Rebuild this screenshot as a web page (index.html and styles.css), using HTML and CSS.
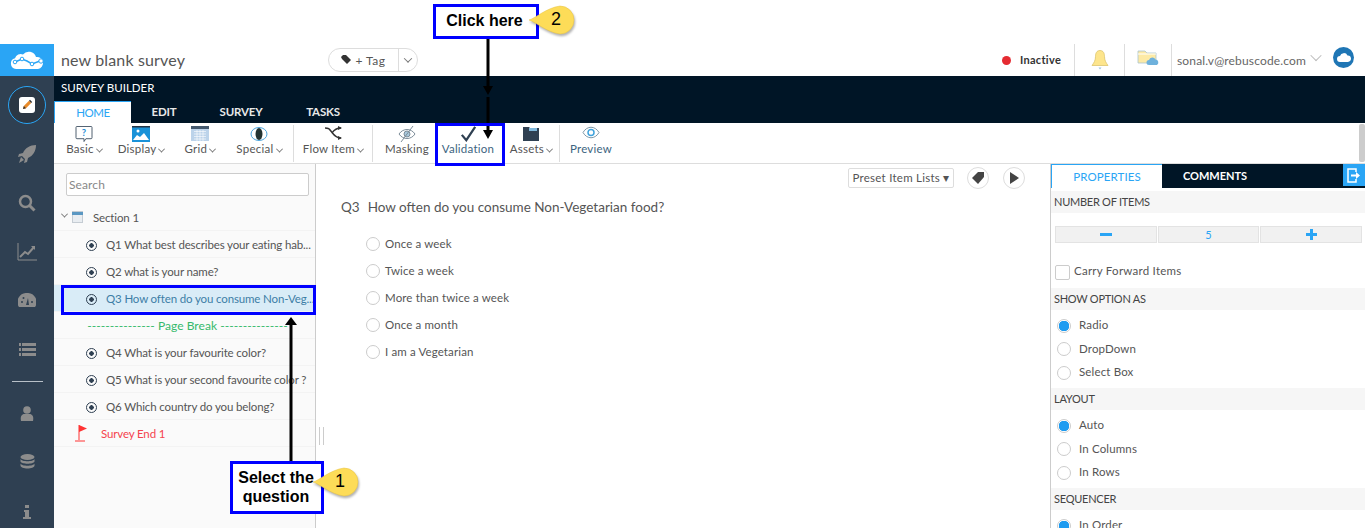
FILE: index.html
```html
<!DOCTYPE html>
<html lang="en">
<head>
    <meta charset="UTF-8">
    <meta name="viewport" content="width=device-width, initial-scale=1.0">
    <title>Survey Builder</title>
    <link rel="stylesheet" href="styles.css">
</head>
<body>
    <div class="page">
        <div class="app">
            <aside class="rail">
                <div class="rail-logo">
                    <svg width="36" height="22" viewBox="0 0 36 22"><path d="M7 20a5.500 5.500 0 0 1-1-10.800 6 6 0 0 1 8-3.700A7.500 7.500 0 0 1 27 8a6 6 0 0 1 2 12z" fill="#fff"/><path d="M6 13l7-3 5 2 5 3 8-3" fill="none" stroke="#2aa5f5" stroke-width="1.500"/><circle cx="6" cy="13" r="1.800" fill="#fff" stroke="#2aa5f5"/><circle cx="13" cy="10" r="1.800" fill="#fff" stroke="#2aa5f5"/><circle cx="23" cy="15" r="1.800" fill="#fff" stroke="#2aa5f5"/><circle cx="32" cy="12" r="2.200" fill="#fff" stroke="#2aa5f5"/></svg>
                </div>
                <div class="rail-item">
                    <span class="rail-active">
                        <svg width="16" height="16" viewBox="0 0 16 16"><rect width="16" height="16" rx="3" fill="#fff"/><path d="M4 12l.8-3L10 3.800l2.200 2.200L7 11.200z" fill="#e98b2a"/><path d="M10 3.800l1-1 2.200 2.200-1 1z" fill="#333"/><path d="M4 12l.8-3 2.200 2.200z" fill="#333"/></svg>
                    </span>
                </div>
                <div class="rail-item">
                    <svg width="18" height="18" viewBox="0 0 18 18"><path d="M18 0c-6 0-11 3-13 8l-4 1-1 3 4-1 3 3-1 4 3-1 1-4c5-2 8-7 8-13z" fill="#8c8c8c"/><path d="M3 12l3 3-5 3z" fill="#8c8c8c"/></svg>
                </div>
                <div class="rail-item">
                    <svg width="18" height="18" viewBox="0 0 18 18"><circle cx="7.500" cy="7.500" r="5.500" fill="none" stroke="#8c8c8c" stroke-width="2.500"/><path d="M11.500 11.500L16.500 16.500" stroke="#8c8c8c" stroke-width="3"/></svg>
                </div>
                <div class="rail-item">
                    <svg width="20" height="18" viewBox="0 0 20 18"><path d="M1 0v17h19" fill="none" stroke="#8c8c8c"/><path d="M3 14l5-5 3 2 6-7" fill="none" stroke="#8c8c8c" stroke-width="2"/><path d="M14 3h4v4z" fill="#8c8c8c"/></svg>
                </div>
                <div class="rail-item">
                    <svg width="18" height="15" viewBox="0 0 18 15"><path d="M9 0a9 9 0 0 0-8 14h16A9 9 0 0 0 9 0z" fill="#8c8c8c"/><path d="M8 12l2-7 1 7z" fill="#2f4052"/><circle cx="4" cy="9" r="1" fill="#2f4052"/><circle cx="5.500" cy="5" r="1" fill="#2f4052"/><circle cx="14" cy="9" r="1" fill="#2f4052"/></svg>
                </div>
                <div class="rail-item">
                    <svg width="17" height="13" viewBox="0 0 17 13"><path d="M0 0h2v3H0zM3 0h14v3H3zM0 5h2v3H0zM3 5h14v3H3zM0 10h2v3H0zM3 10h14v3H3z" fill="#8c8c8c"/></svg>
                </div>
                <div class="rail-rule"></div>
                <div class="rail-item">
                    <svg width="14" height="15" viewBox="0 0 14 15"><circle cx="7" cy="4" r="3.800" fill="#8c8c8c"/><path d="M1 15c-1-5 1-7 3.500-7h5c2.500 0 4.500 2 3.500 7z" fill="#8c8c8c"/></svg>
                </div>
                <div class="rail-item">
                    <svg width="15" height="17" viewBox="0 0 15 17"><ellipse cx="7.500" cy="3" rx="7" ry="3" fill="#8c8c8c"/><path d="M.5 5c1 3 13 3 14 0v2.500c-1 3-13 3-14 0zM.5 9.500c1 3 13 3 14 0v2c0 4-14 4-14 0z" fill="#8c8c8c"/></svg>
                </div>
                <div class="rail-item">
                    <svg width="8" height="14" viewBox="0 0 8 14"><path d="M2 0h4v3H2zM1 5h5v7h2v2H0v-2h2V7H1z" fill="#8c8c8c"/></svg>
                </div>
            </aside>

            <main class="main">
                <header class="header">
                    <div class="survey-title">new blank survey</div>
                    <div class="tag-btn">
                        <span class="tag-label">
                            <svg width="10" height="10" viewBox="0 0 10 10"><path d="M0 2l2-2 3 0 5 5-4 4-5-5z" fill="#333"/></svg>
                            + Tag
                        </span>
                        <span class="tag-drop"><span class="chev"></span></span>
                    </div>
                    <div class="header-right">
                        <span class="status-dot"></span>
                        <span class="status-text">Inactive</span>
                        <span class="head-cell head-bell">
                            <svg width="18" height="23" viewBox="0 0 18 22"><path d="M9 1c-3.500 0-4.500 3-4.500 6 0 4-1.500 6-3.500 9h16c-2-3-3.500-5-3.500-9 0-3-1-6-4.500-6z" fill="#fde58c" stroke="#d8bf62" stroke-width=".7"/><path d="M7.500 18h3L9 20z" fill="#9cc3dc"/></svg>
                        </span>
                        <span class="head-cell head-folder">
                            <svg width="22" height="20" viewBox="0 0 22 20"><path d="M1 3h7l2 2h9v10H1z" fill="#fdeaa5" stroke="#a9c4cf" stroke-width=".8"/><path d="M1 6h18" stroke="#fff"/><path d="M12 17a2.500 2.500 0 0 1 0-5 3.500 3.500 0 0 1 6.500-.5 3 3 0 0 1 1.500 5.500z" fill="#6eb1dc"/></svg>
                        </span>
                        <span class="user-email">sonal.v@rebuscode.com</span>
                        <span class="chev chev-user"></span>
                        <span class="avatar">
                            <svg width="14" height="9" viewBox="0 0 14 9"><path d="M3 9a3 3 0 0 1 0-6 4 4 0 0 1 7.500-.5A3.200 3.200 0 0 1 11 9z" fill="#fff"/></svg>
                        </span>
                    </div>
                </header>

                <div class="builder-bar">
                    <div class="builder-title">SURVEY BUILDER</div>
                    <ul class="tabs">
                        <li class="tab tab-active">HOME</li>
                        <li class="tab">EDIT</li>
                        <li class="tab">SURVEY</li>
                        <li class="tab">TASKS</li>
                    </ul>
                </div>

                <div class="toolbar">
                    <div class="tool">
                        <svg width="18" height="17" viewBox="0 0 18 17"><path d="M1.500.5h15a1 1 0 0 1 1 1v11a1 1 0 0 1-1 1H11l-2 3v-3H1.500a1 1 0 0 1-1-1v-11a1 1 0 0 1 1-1z" fill="#fff" stroke="#456"/><text x="9" y="10.500" class="tool-q">?</text></svg>
                        <span class="tool-label">Basic <i class="chev"></i></span>
                    </div>
                    <div class="tool">
                        <svg width="18" height="16" viewBox="0 0 18 16"><rect width="18" height="16" fill="#1a92d8"/><rect width="18" height="1.500" fill="#234"/><circle cx="6" cy="5" r="1.500" fill="#fff"/><path d="M1 14l4-5 3 2 4-4 5 7z" fill="#fff"/></svg>
                        <span class="tool-label">Display <i class="chev"></i></span>
                    </div>
                    <div class="tool">
                        <svg width="18" height="15" viewBox="0 0 18 15"><rect width="18" height="15" fill="#bcd3ea"/><rect width="18" height="3" fill="#42586e"/><path d="M3 5.500h12M3 8h12M3 10.500h12M3 13h12M6 4v11M9 4v11M12 4v11" stroke="#fff" stroke-width=".6"/></svg>
                        <span class="tool-label">Grid <i class="chev"></i></span>
                    </div>
                    <div class="tool">
                        <svg width="18" height="16" viewBox="0 0 18 16"><ellipse cx="9" cy="8" rx="8" ry="6.500" fill="#fff" stroke="#4aa3dc"/><ellipse cx="9" cy="8" rx="3.500" ry="6" fill="#233"/></svg>
                        <span class="tool-label">Special <i class="chev"></i></span>
                    </div>
                    <div class="tool-sep tool-sep-wide"></div>
                    <div class="tool">
                        <svg width="18" height="14" viewBox="0 0 18 14"><path d="M1 2c4 0 4 .5 7 4.500S13 12 17 12M8 7c2-3 4-5 9-5" fill="none" stroke="#333" stroke-width="1.500"/><path d="M14 0l4 2-4 2zM14 10l4 2-4 2z" fill="#333"/></svg>
                        <span class="tool-label">Flow Item <i class="chev"></i></span>
                    </div>
                    <div class="tool-sep"></div>
                    <div class="tool">
                        <svg width="18" height="16" viewBox="0 0 18 16"><path d="M1 8c4-6 12-6 16 0-4 6-12 6-16 0z" fill="#fff" stroke="#7d8d99"/><circle cx="9" cy="8" r="3" fill="#a8c8dc" stroke="#7d8d99"/><path d="M15 0L3 16" stroke="#7d8d99"/></svg>
                        <span class="tool-label">Masking</span>
                    </div>
                    <div class="tool">
                        <svg width="17" height="18" viewBox="0 0 17 18"><path d="M1 10l5 6L16 1" fill="none" stroke="#2f4052" stroke-width="2.500"/></svg>
                        <span class="tool-label tool-label-blue">Validation</span>
                    </div>
                    <div class="tool tool-assets">
                        <svg width="16" height="15" viewBox="0 0 16 15"><path d="M0 1h6l1 1h9v13H0z" fill="#2f4052"/><path d="M6 2h8v3H6z" fill="#7fb8dc"/></svg>
                        <span class="tool-label">Assets <i class="chev"></i></span>
                    </div>
                    <div class="tool-sep"></div>
                    <div class="tool">
                        <svg width="18" height="13" viewBox="0 0 18 13"><path d="M1 6.500c4-7 12-7 16 0-4 7-12 7-16 0z" fill="#fff" stroke="#7d98a8"/><circle cx="9" cy="6.500" r="3" fill="#fff" stroke="#3fa3dd" stroke-width="1.500"/></svg>
                        <span class="tool-label tool-label-blue">Preview</span>
                    </div>
                    <div class="toolbar-scroll"></div>
                </div>

                <div class="workspace">
                    <section class="tree">
                        <input class="tree-search" type="text" placeholder="Search">
                        <div class="tree-row tree-section">
                            <span class="chev chev-section"></span>
                            <svg width="11" height="12" viewBox="0 0 11 12"><rect width="11" height="12" fill="#e9edf1"/><rect x=".5" y=".5" width="10" height="11" fill="none" stroke="#c5ccd3"/><rect width="11" height="3" y="1" fill="#5a97c2"/></svg>
                            <span class="section-name">Section 1</span>
                        </div>
                        <div class="tree-row tree-q"><span class="q-dot"></span><span class="q-text">Q1 What best describes your eating hab...</span></div>
                        <div class="tree-row tree-q"><span class="q-dot"></span><span class="q-text">Q2 what is your name?</span></div>
                        <div class="tree-row tree-q tree-selected"><span class="q-dot"></span><span class="q-text">Q3 How often do you consume Non-Veg...</span></div>
                        <div class="tree-row tree-break">--------------- Page Break ---------------</div>
                        <div class="tree-row tree-q"><span class="q-dot"></span><span class="q-text">Q4 What is your favourite color?</span></div>
                        <div class="tree-row tree-q"><span class="q-dot"></span><span class="q-text">Q5 What is your second favourite color ?</span></div>
                        <div class="tree-row tree-q"><span class="q-dot"></span><span class="q-text">Q6 Which country do you belong?</span></div>
                        <div class="tree-row tree-end">
                            <svg width="12" height="18" viewBox="0 0 12 18"><path d="M4 1v15" stroke="#f33" stroke-width="1"/><path d="M4 1l8 3.500L4 8z" fill="#f33"/><path d="M0 17h10" stroke="#f33"/></svg>
                            <span>Survey End 1</span>
                        </div>
                    </section>

                    <section class="canvas">
                        <div class="resizer"></div>
                        <div class="canvas-tools">
                            <div class="preset-btn">Preset Item Lists &#9662;</div>
                            <span class="round-btn">
                                <svg width="14" height="14" viewBox="0 0 14 14"><path d="M1 7l6-6h6v5l-6 7z" fill="#444"/></svg>
                            </span>
                            <span class="round-btn">
                                <svg width="10" height="12" viewBox="0 0 10 12"><path d="M1 0l9 6-9 6z" fill="#444"/></svg>
                            </span>
                        </div>
                        <div class="question">
                            <span class="question-no">Q3</span>
                            <span>How often do you consume Non-Vegetarian food?</span>
                        </div>
                        <ul class="options">
                            <li class="option"><span class="radio"></span>Once a week</li>
                            <li class="option"><span class="radio"></span>Twice a week</li>
                            <li class="option"><span class="radio"></span>More than twice a week</li>
                            <li class="option"><span class="radio"></span>Once a month</li>
                            <li class="option"><span class="radio"></span>I am a Vegetarian</li>
                        </ul>
                    </section>

                    <section class="props">
                        <div class="props-tabs">
                            <div class="props-tab props-tab-active">PROPERTIES</div>
                            <div class="props-tab">COMMENTS</div>
                            <div class="props-export">
                                <svg width="14" height="15" viewBox="0 0 14 15"><path d="M9 4V1H1v13h8v-3" fill="none" stroke="#fff" stroke-width="1.500"/><path d="M4 6.500h5V4l4 3.500L9 11V8.500H4z" fill="#fff"/></svg>
                            </div>
                        </div>
                        <div class="props-head props-head-first">NUMBER OF ITEMS</div>
                        <div class="stepper">
                            <span class="step">
                                <svg width="12" height="3" viewBox="0 0 12 3"><rect width="12" height="3" fill="#2aa5f5"/></svg>
                            </span>
                            <span class="step">5</span>
                            <span class="step">
                                <svg width="11" height="11" viewBox="0 0 11 11"><path d="M4 0h3v4h4v3H7v4H4V7H0V4h4z" fill="#2aa5f5"/></svg>
                            </span>
                        </div>
                        <label class="carry"><span class="check"></span>Carry Forward Items</label>
                        <div class="props-head">SHOW OPTION AS</div>
                        <div class="prop-radios">
                            <div class="prop-radio"><span class="radio radio-on"></span>Radio</div>
                            <div class="prop-radio"><span class="radio"></span>DropDown</div>
                            <div class="prop-radio"><span class="radio"></span>Select Box</div>
                        </div>
                        <div class="props-head">LAYOUT</div>
                        <div class="prop-radios">
                            <div class="prop-radio"><span class="radio radio-on"></span>Auto</div>
                            <div class="prop-radio"><span class="radio"></span>In Columns</div>
                            <div class="prop-radio"><span class="radio"></span>In Rows</div>
                        </div>
                        <div class="props-head">SEQUENCER</div>
                        <div class="prop-radios">
                            <div class="prop-radio"><span class="radio radio-on"></span>In Order</div>
                        </div>
                    </section>
                </div>
            </main>
        </div>

        <!-- annotations drawn on top of the screenshot -->
        <svg class="arrows" width="1365" height="528" viewBox="0 0 1365 528">
            <path d="M488 39v50M488 97v34M291 461V325" stroke="#000" stroke-width="3" fill="none"/>
            <path d="M483 86h10l-5 9zM483 130h10l-5 9zM285 325h12l-6-8z" fill="#000"/>
        </svg>
        <div class="note-box note-validation"></div>
        <div class="note-box note-question"></div>
        <div class="note note-click">Click here</div>
        <div class="note note-select">Select the question</div>
        <div class="badge badge-two">
            <svg width="48" height="32" viewBox="0 0 48 32"><path d="M1 16C8 14 18 4 32 2a14 14 0 1 1 0 28C18 28 8 18 1 16z" fill="#fddc58" stroke="#e6c245" stroke-width=".5"/></svg>
            <span>2</span>
        </div>
        <div class="badge badge-one">
            <svg width="48" height="32" viewBox="0 0 48 32"><path d="M1 16C8 14 18 4 32 2a14 14 0 1 1 0 28C18 28 8 18 1 16z" fill="#fddc58" stroke="#e6c245" stroke-width=".5"/></svg>
            <span>1</span>
        </div>
    </div>
</body>
</html>
```
FILE: styles.css
```css
* {
    box-sizing: border-box;
}
body {
    font-family: Lato, "Open Sans", sans-serif;
    background-color: #fff;
    color: #555;
    margin: 0;
    padding: 0;
}
ul {
    list-style: none;
    margin: 0;
    padding: 0;
}
.page {
    position: relative;
    width: 1365px;
    height: 528px;
    overflow: hidden;
    padding-top: 44px;
}
.app {
    display: flex;
    height: 484px;
}

/* left rail */
.rail {
    width: 54px;
    flex: none;
    background-color: #2f4052;
    display: flex;
    flex-direction: column;
}
.rail-logo {
    height: 32px;
    flex: none;
    background-color: #2aa5f5;
    display: flex;
    align-items: center;
    justify-content: center;
}
.rail-item {
    height: 49px;
    flex: none;
    display: flex;
    align-items: center;
    justify-content: center;
}
.rail-item:nth-child(2) {
    margin-top: 4px;
}
.rail-active {
    width: 38px;
    height: 38px;
    border-radius: 50%;
    border: 1px solid #2aa5f5;
    background-color: #2b3744;
    display: flex;
    align-items: center;
    justify-content: center;
}
.rail-rule {
    height: 1px;
    flex: none;
    margin: 7px 11px 7px 12px;
    background-color: #b8c0c8;
}

/* header */
.main {
    flex: 1;
    min-width: 0;
    display: flex;
    flex-direction: column;
}
.header {
    height: 32px;
    flex: none;
    display: flex;
    align-items: center;
    padding-left: 7px;
}
.survey-title {
    width: 267px;
    font-size: 16px;
    letter-spacing: 0.15px;
    color: #555;
    padding-bottom: 2px;
}
.tag-btn {
    width: 90px;
    height: 24px;
    border: 1px solid #ddd;
    border-radius: 12px;
    display: flex;
    font-size: 12px;
    letter-spacing: 0.5px;
}
.tag-label {
    width: 70px;
    border-right: 1px solid #ddd;
    display: flex;
    align-items: center;
    justify-content: center;
    gap: 4px;
}
.tag-drop {
    flex: 1;
    display: flex;
    align-items: center;
    justify-content: center;
}
.chev {
    display: inline-block;
    width: 6px;
    height: 6px;
    border-right: 1px solid #777;
    border-bottom: 1px solid #777;
    transform: rotate(45deg) translate(-1px, -1px);
}
.header-right {
    margin-left: auto;
    display: flex;
    align-items: center;
    height: 32px;
}
.status-dot {
    width: 9px;
    height: 9px;
    border-radius: 50%;
    background-color: #e52b32;
    margin-right: 9px;
}
.status-text {
    width: 54px;
    font-size: 11px;
    font-weight: 700;
    letter-spacing: 0.3px;
    color: #333;
    padding-bottom: 2px;
}
.head-cell {
    height: 32px;
    border-left: 1px solid #ddd;
    display: flex;
    align-items: center;
    justify-content: center;
}
.head-bell {
    width: 50px;
}
.head-folder {
    width: 48px;
    border-right: 1px solid #ddd;
    padding-bottom: 4px;
}
.user-email {
    margin-left: 5px;
    width: 135px;
    font-size: 12px;
    letter-spacing: 0.15px;
    color: #666;
}
.chev-user {
    border-color: #bbb;
    margin-bottom: 6px;
    width: 8px;
    height: 8px;
}
.avatar {
    width: 21px;
    height: 21px;
    border-radius: 50%;
    background-color: #1f76b5;
    margin: 0 11px 6px 13px;
    display: flex;
    align-items: center;
    justify-content: center;
}

/* dark bar */
.builder-bar {
    height: 47px;
    flex: none;
    background-color: #001526;
    display: flex;
    flex-direction: column;
    justify-content: space-between;
}
.builder-title {
    color: #fff;
    font-size: 11.5px;
    padding: 5px 0 0 7px;
}
.tabs {
    display: grid;
    grid-template-columns: 77px 66px 88px 76px;
}
.tab {
    height: 22px;
    font-size: 11.5px;
    font-weight: 700;
    letter-spacing: -0.2px;
    line-height: 21px;
    color: #e8e8e8;
    text-align: center;
}
.tab-active {
    background-color: #fff;
    border-top: 1px solid #2aa5f5;
    border-left: 1px solid #2aa5f5;
    font-weight: 400;
    letter-spacing: -0.4px;
    color: #2aa5f5;
}

/* toolbar */
.toolbar {
    position: relative;
    height: 41px;
    flex: none;
    display: grid;
    grid-template-columns: 60px 54px 64px 54px 8px 78px 1px 68px 54px 64px 1px 62px;
    border-bottom: 1px solid #ddd;
}
.tool {
    display: flex;
    flex-direction: column;
    align-items: center;
    justify-content: space-between;
    height: 40px;
    padding: 3px 0 8px;
    white-space: nowrap;
}
.tool-assets {
    padding-left: 8px;
}
.tool-label {
    font-size: 11.5px;
    letter-spacing: 0.25px;
    color: #555;
    line-height: 13px;
}
.tool-label-blue {
    color: #3d6480;
}
.tool-label .chev {
    width: 5px;
    height: 5px;
}
.tool-q {
    font-size: 10px;
    font-weight: 700;
    fill: #2a8fd6;
    text-anchor: middle;
}
.tool-sep {
    width: 1px;
    height: 37px;
    margin-top: 2px;
    background-color: #ddd;
}
.tool-sep-wide {
    justify-self: end;
}
.toolbar-scroll {
    position: absolute;
    right: 0;
    top: 1px;
    width: 6px;
    height: 38px;
    background-color: #ccc;
    border-radius: 2px;
}

/* main three columns */
.workspace {
    flex: 1;
    min-height: 0;
    display: flex;
}
.tree {
    width: 262px;
    flex: none;
    background-color: #fafafa;
    border-right: 1px solid #ccc;
    padding-top: 9px;
}
.tree-search {
    display: block;
    width: 243px;
    height: 23px;
    margin: 0 0 8px 12px;
    border: 1px solid #ccc;
    border-radius: 2px;
    padding: 0 2px;
    font-family: inherit;
    font-size: 12px;
    letter-spacing: 0.1px;
    background-color: #fff;
}
.tree-search::placeholder {
    color: #888;
}
.tree-row {
    height: 27px;
    display: flex;
    align-items: center;
    font-size: 11.5px;
    letter-spacing: -0.14px;
    color: #555;
    border-bottom: 1px solid #f3f3f3;
    white-space: nowrap;
}
.tree-section {
    padding-left: 8px;
    gap: 5px;
    margin-top: 1px;
}
.chev-section {
    width: 5px;
    height: 5px;
    margin-bottom: 3px;
}
.section-name {
    margin-left: 5px;
}
.tree-q {
    padding-left: 32px;
}
.q-dot {
    width: 11px;
    height: 11px;
    border-radius: 50%;
    border: 1px solid #2f4052;
    margin: 2px 9px 0 0;
    flex: none;
    background: radial-gradient(circle, #2f4052 0 2px, transparent 2.500px);
}
.tree-selected {
    background-color: #d9ecf7;
}
.tree-selected .q-text {
    color: #3d7ea6;
}
.tree-break {
    justify-content: center;
    color: #35b96b;
    padding-left: 6px;
    font-size: 12px;
    letter-spacing: 0.05px;
}
.tree-end {
    padding-left: 21px;
    gap: 14px;
    color: #f5434e;
}

/* canvas */
.canvas {
    position: relative;
    width: 734px;
    flex: none;
    border-top: 0;
    padding: 3px 0 0 25px;
}
.canvas-tools {
    display: flex;
    align-items: center;
    justify-content: flex-end;
    gap: 12px;
    height: 22px;
    padding-right: 25px;
}
.preset-btn {
    width: 106px;
    height: 20px;
    border: 1px solid #ddd;
    border-radius: 2px;
    font-size: 11.5px;
    letter-spacing: 0.25px;
    line-height: 18px;
    text-align: center;
    color: #555;
    margin-right: 1px;
}
.round-btn {
    width: 22px;
    height: 22px;
    border-radius: 50%;
    border: 1px solid #ddd;
    display: flex;
    align-items: center;
    justify-content: center;
}
.round-btn + .round-btn {
    margin-left: 2px;
}
.question {
    margin-top: 8px;
    font-size: 13.5px;
    line-height: 20px;
    display: flex;
    gap: 8px;
    color: #555;
}
.options {
    padding: 13px 0 0 25px;
}
.option {
    height: 27px;
    display: flex;
    align-items: center;
    gap: 5px;
    font-size: 11.5px;
    letter-spacing: 0.13px;
    color: #555;
}
.radio {
    width: 14px;
    height: 14px;
    border-radius: 50%;
    border: 1px solid #ccc;
    background-color: #fff;
    flex: none;
}
.radio-on {
    background: radial-gradient(circle, #1e9bf0 0 5px, #fff 5.500px);
}
.resizer {
    position: absolute;
    left: 3px;
    top: 263px;
    width: 5px;
    height: 18px;
    border-left: 1px solid #ccc;
    border-right: 1px solid #ccc;
}

/* right panel */
.props {
    flex: 1;
    min-width: 0;
    border-left: 1px solid #ccc;
}
.props-tabs {
    height: 24px;
    background-color: #001526;
    display: flex;
    position: relative;
    font-size: 11px;
}
.props-tab {
    width: 111px;
    line-height: 24px;
    text-align: center;
    color: #fff;
    font-weight: 700;
}
.props-tab + .props-tab {
    width: 106px;
}
.props-tab-active {
    background-color: #fff;
    color: #2aa5f5;
    font-size: 11.5px;
    font-weight: 400;
    letter-spacing: 0.1px;
    border: 1px solid #2aa5f5;
    border-width: 1px 0 0 1px;
}
.props-export {
    position: absolute;
    right: 0;
    top: 0;
    width: 22px;
    height: 22px;
    background-color: #2aa5f5;
    display: flex;
    align-items: center;
    justify-content: center;
}
.props-head {
    height: 22px;
    background-color: #f6f6f6;
    font-size: 11px;
    letter-spacing: -0.25px;
    line-height: 22px;
    padding-left: 3px;
    color: #444;
}
.props-head-first {
    margin-top: 3px;
}
.stepper {
    display: grid;
    grid-template-columns: 1fr 1fr 1fr;
    gap: 1px;
    height: 17px;
    margin: 13px 3px 0 4px;
}
.step {
    background-color: #f1f1f1;
    border: 1px solid #e3e3e3;
    display: flex;
    align-items: center;
    justify-content: center;
    font-size: 11px;
    color: #2aa5f5;
}
.carry {
    display: flex;
    align-items: center;
    gap: 4px;
    height: 16px;
    margin: 19px 0 10px 4px;
    font-size: 11.5px;
    letter-spacing: 0.25px;
}
.check {
    width: 15px;
    height: 15px;
    border: 1px solid #ccc;
    border-radius: 2px;
    background-color: #fff;
    margin-top: 5px;
    flex: none;
}
.prop-radios {
    padding: 3px 0 4.500px 6px;
}
.prop-radio {
    height: 23.500px;
    display: flex;
    align-items: center;
    gap: 8px;
    font-size: 11.5px;
    letter-spacing: 0.15px;
    color: #555;
}
.prop-radio .radio {
    margin-top: 2px;
}

/* annotations */
.arrows {
    position: absolute;
    left: 0;
    top: 0;
    pointer-events: none;
}
.note-box {
    position: absolute;
    border: 3px solid #00f;
}
.note-validation {
    left: 435px;
    top: 123px;
    width: 70px;
    height: 43px;
}
.note-question {
    left: 61px;
    top: 285px;
    width: 255px;
    height: 30px;
}
.note {
    position: absolute;
    background-color: #fff;
    border: 3px solid #00f;
    font-family: "Liberation Sans", Arial, sans-serif;
    font-size: 16px;
    font-weight: 700;
    color: #000;
    text-align: center;
    display: flex;
    align-items: center;
    justify-content: center;
}
.note-click {
    left: 433px;
    top: 4px;
    width: 106px;
    height: 35px;
    padding: 0 3px 2px 0;
}
.note-select {
    left: 230px;
    top: 461px;
    width: 94px;
    height: 53px;
    line-height: 19px;
    padding: 0 6px 2px 4px;
}
.badge {
    position: absolute;
    width: 48px;
    height: 32px;
    font-family: "Liberation Sans", Arial, sans-serif;
    font-size: 18px;
    color: #000;
}
.badge svg {
    display: block;
    filter: drop-shadow(1px 2px 1px rgba(0, 0, 0, 0.3));
}
.badge span {
    position: absolute;
    left: 21px;
    top: 5px;
    width: 14px;
    text-align: center;
}
.badge-two {
    left: 528px;
    top: 4px;
}
.badge-one {
    left: 312px;
    top: 466px;
}
```
